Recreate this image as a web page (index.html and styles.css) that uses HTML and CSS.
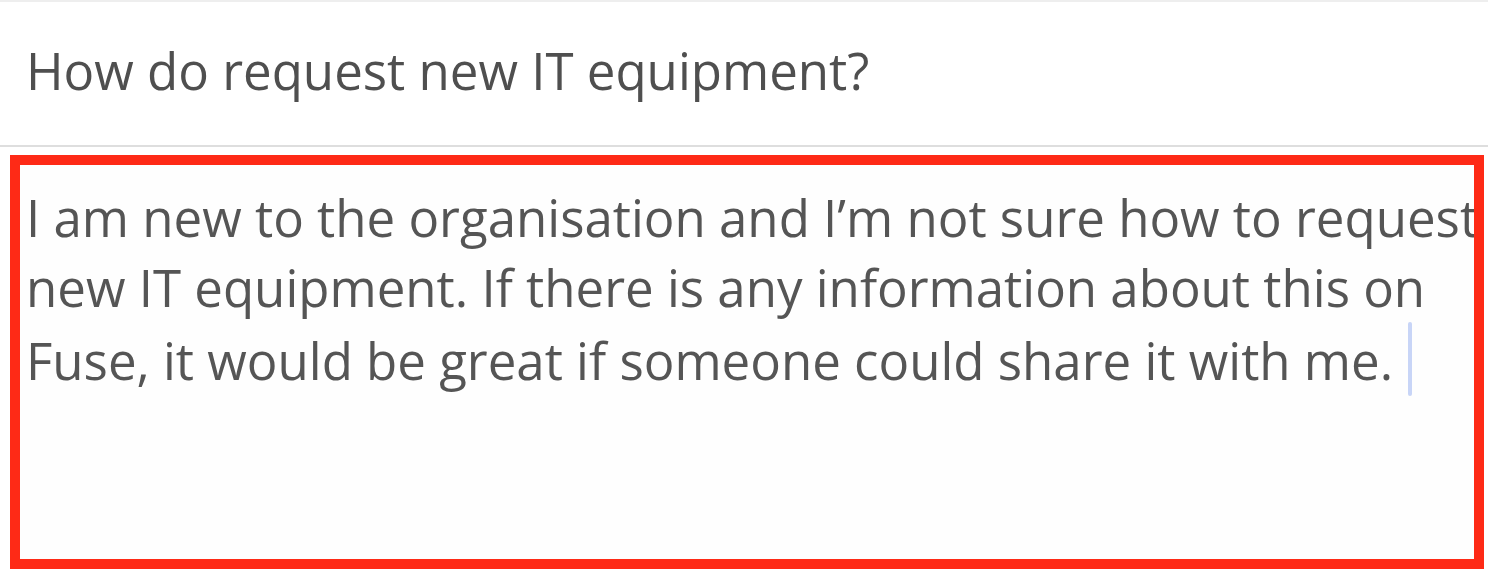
FILE: index.html
```html
<!DOCTYPE html>
<html lang="en">
<head>
    <title>New Question</title>
    <link rel="stylesheet" href="styles.css">
</head>
<body>
    <div class="topline"></div>
    <div class="title">How do request new IT equipment?</div>
    <div class="editor">
        <div class="text">I am new to the organisation and I’m not sure how to request new IT equipment. If there is any information about this on Fuse, it would be great if someone could share it with me. <span class="caret"></span></div>
    </div>
</body>
</html>
```

FILE: styles.css
```css
body {
    margin: 0;
    font-family: "Open Sans", sans-serif;
    background: #fff;
    color: #555;
}

.topline {
    height: 2px;
    background: #eeeeee;
}

.title {
    height: 145px;
    box-sizing: border-box;
    padding: 34px 26px 0;
    font-size: 51px;
    line-height: 1.36;
    color: #4f4f4f;
    border-bottom: 2px solid #dedede;
}

.editor {
    margin: 8px 0 0 10px;
    width: 1474px;
    height: 414px;
    box-sizing: border-box;
    border: 10px solid #fe2a16;
    background: #fefefe;
    overflow: hidden;
}

.text {
    width: 1456px;
    padding: 17px 0 0 6px;
    font-size: 51px;
    line-height: 70px;
}

.caret {
    display: inline-block;
    width: 4px;
    height: 74px;
    margin-left: 2px;
    vertical-align: -16px;
    background: #c8d5f7;
    border-radius: 2px;
}
```
